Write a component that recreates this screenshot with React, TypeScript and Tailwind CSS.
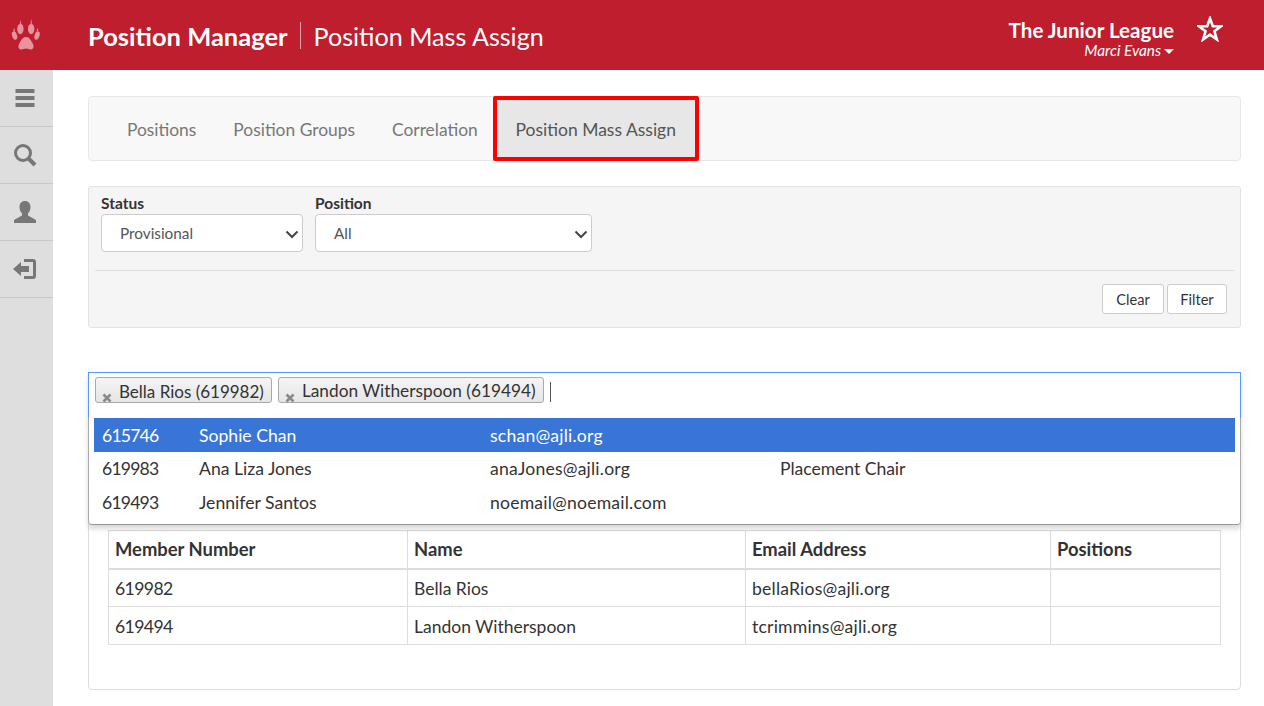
import React from "react";

const Chevron = () => (
  <svg width="14" height="14" viewBox="0 0 14 14" className="absolute right-[3px] top-[12px]">
    <path d="M1.500 4.500 L7 10 L12.500 4.500" fill="none" stroke="#444" strokeWidth="2" />
  </svg>
);

const Paw = () => (
  <svg width="30" height="36" viewBox="0 0 32 38" fill="#e8949f">
    <path d="M16 20c-3.600 0-5.400 3.800-7 6.800-1.300 2.400-1.800 5.200 .6 6.200 2.200 .9 4-.6 6.400-.6s4.200 1.500 6.400 .6c2.400-1 1.900-3.800 .6-6.200-1.600-3-3.400-6.800-7-6.800z" />
    <ellipse cx="10" cy="11.500" rx="3.400" ry="5.500" />
    <ellipse cx="21.500" cy="11.500" rx="3.400" ry="5.500" />
    <ellipse cx="3.800" cy="18.500" rx="2.600" ry="4.600" transform="rotate(-18 3.800 18.500)" />
    <ellipse cx="27.800" cy="18.500" rx="2.600" ry="4.600" transform="rotate(18 27.800 18.500)" />
    <path d="M10 2 L9.300 6 L11 6z M21.500 0.500 L20.700 6 L22.300 6z M3 10 L2.800 14 L4.400 13.500z M28.800 10 L27.300 13.500 L29 14z" />
  </svg>
);

const SideItem = ({ children }: { children: React.ReactNode }) => (
  <div className="flex h-[57px] items-center justify-center border-b border-[#c9c9c9] pr-[3px]">{children}</div>
);

const Token = ({ label, wide }: { label: string; wide?: boolean }) => (
  <div className={`relative flex h-[26px] items-center rounded-[3px] border border-[#aaaaaa] bg-gradient-to-b from-[#f4f4f4] to-[#e6e6e6] pl-[23px] pr-[7px] pt-[2px] leading-none text-[#333] ${wide ? "text-[17.3px]" : "text-[17px]"}`}>
    <svg width="10" height="10" viewBox="0 0 10 10" className="absolute bottom-[-1px] left-[6px]">
      <path d="M1.500 1.500 L8.500 8.500 M8.500 1.500 L1.500 8.500" stroke="#8a8a8a" strokeWidth="2.600" />
    </svg>
    {label}
  </div>
);

const Option = ({ cells, active }: { cells: string[]; active?: boolean }) => (
  <div className={`flex h-[34px] items-center px-[8px] text-[17.6px] ${active ? "bg-[#3875d7] pt-[2px] text-white" : "pt-[1px] text-[#333]"}`}>
    <div className="w-[97px] tracking-[-0.8px]">{cells[0]}</div>
    <div className="w-[291px]">{cells[1]}</div>
    <div className="w-[290px] tracking-[0.2px]">{cells[2]}</div>
    <div className="tracking-[-0.05px]">{cells[3]}</div>
  </div>
);

const thClass = "border border-b-2 border-[#dddddd] px-[6px] pt-[1px] text-left align-middle text-[18.4px] font-bold text-[#333]";
const tdClass = "border border-[#dddddd] px-[6px] pt-[3px] align-middle font-normal text-[#333]";

const Row = ({ c }: { c: string[] }) => (
  <tr className="h-[38px]">
    <td className={`${tdClass} text-[17.6px] tracking-[-0.6px]`}>{c[0]}</td>
    <td className={`${tdClass} text-[17.5px]`}>{c[1]}</td>
    <td className={`${tdClass} text-[17.6px] tracking-[0.2px]`}>{c[2]}</td>
    <td className={tdClass}>{c[3]}</td>
  </tr>
);

export default function App() {
  return (
    <div className="flex h-[706px] flex-col overflow-hidden bg-white font-['Lato',sans-serif] text-[#333]">
      <header className="relative flex h-[70px] shrink-0 items-center bg-[#be1e2d] text-white">
        <div className="flex w-[53px] shrink-0 justify-center pt-[1px] pr-[1px]"><Paw /></div>
        <div className="ml-[35px] mt-[4px] text-[25.5px] font-bold leading-none">Position Manager</div>
        <div className="ml-[12px] h-[27px] w-px bg-[#e8a0a8]" />
        <div className="ml-[13px] mt-[4px] text-[25.1px] leading-none">Position Mass Assign</div>
        <div className="ml-auto mr-[90px] mt-[6px] flex flex-col items-end">
          <div className="text-[20.6px] font-bold leading-[24px]">The Junior League</div>
          <div className="flex items-center text-[15.3px] italic leading-[16px]">
            Marci Evans
            <span className="ml-[3px] mt-[2px] h-0 w-0 border-x-[5px] border-t-[5px] border-x-transparent border-t-white" />
          </div>
        </div>
        <svg width="26" height="26" viewBox="0 0 28 28" className="absolute left-[1197px] top-[16px]">
          <path d="M14 2.500 L17 11 L26 11 L18.800 16.500 L21.400 25.200 L14 20 L6.600 25.200 L9.200 16.500 L2 11 L11 11 Z" fill="none" stroke="white" strokeWidth="2.800" />
        </svg>
      </header>

      <div className="flex min-h-0 flex-1">
        <aside className="w-[53px] shrink-0 bg-[#dedede]">
          <SideItem>
            <svg width="20" height="20" viewBox="0 0 20 20" fill="#777">
              <rect x="0.500" y="1" width="19" height="4" rx="0.500" />
              <rect x="0.500" y="8" width="19" height="4" rx="0.500" />
              <rect x="0.500" y="15" width="19" height="4" rx="0.500" />
            </svg>
          </SideItem>
          <SideItem>
            <svg width="24" height="24" viewBox="0 0 24 24" fill="none" stroke="#777">
              <circle cx="10" cy="10" r="7.500" strokeWidth="3" />
              <path d="M15.500 15.500 L22 22" strokeWidth="4" />
            </svg>
          </SideItem>
          <SideItem>
            <svg width="24" height="24" viewBox="0 0 24 24" fill="#777">
              <path d="M12 1c-3.600 0-5.500 2.600-5.500 6 0 2.600 1 5 2.500 6.300v2.200L1 20v3h22v-3l-8-4.500v-2.200c1.500-1.300 2.500-3.700 2.500-6.300 0-3.400-1.900-6-5.500-6z" />
            </svg>
          </SideItem>
          <SideItem>
            <svg width="24" height="22" viewBox="0 0 24 22" fill="#777">
              <path d="M0 11 L8 4 V8 H16 V14 H8 V18 Z" />
              <path d="M11 1 H20 Q23 1 23 4 V18 Q23 21 20 21 H11 V18 H20 V4 H11 Z" />
            </svg>
          </SideItem>
        </aside>

        <main className="flex min-w-0 flex-1 flex-col pl-[35px] pr-[23px] pt-[26px]">
          <nav className="flex h-[65px] shrink-0 items-center rounded-[4px] border border-[#e7e7e7] bg-[#f8f8f8] pl-[23px] text-[17.4px] text-[#777]">
            <div className="px-[15px] pt-[4px]">Positions</div>
            <div className="ml-[7px] px-[15px] pt-[4px]">Position Groups</div>
            <div className="ml-[7px] px-[15px] pt-[4px]">Correlation</div>
            <div className="flex h-[65px] w-[206px] items-center justify-center rounded-[2px] border-[4px] border-[#fd0000] bg-[#e7e7e7] pt-[4px] text-[17.5px] text-[#555]">
              Position Mass Assign
            </div>
          </nav>

          <section className="mt-[25px] h-[142px] shrink-0 rounded-[3px] border border-[#e3e3e3] bg-[#f5f5f5] px-[6px] pt-[7px]">
            <div className="flex gap-[12px] px-[6px]">
              <div>
                <div className="mb-[2px] text-[15.5px] font-bold leading-[18px] text-[#333]">Status</div>
                <div className="relative flex h-[38px] w-[202px] items-center rounded-[4px] border border-[#cccccc] bg-white pl-[18px] text-[15.3px] text-[#555]">
                  Provisional
                  <Chevron />
                </div>
              </div>
              <div>
                <div className="mb-[2px] text-[15.5px] font-bold leading-[18px] text-[#333]">Position</div>
                <div className="relative flex h-[38px] w-[277px] items-center rounded-[4px] border border-[#cccccc] bg-white pl-[18px] text-[15.3px] text-[#555]">
                  All
                  <Chevron />
                </div>
              </div>
            </div>
            <div className="mt-[18px] border-t border-[#dddddd]" />
            <div className="mt-[13px] flex justify-end gap-[3px] pr-[7px]">
              <div className="flex h-[30px] w-[62px] items-center justify-center rounded-[3px] border border-[#cccccc] bg-white pt-[2px] text-[14.6px] text-[#333]">Clear</div>
              <div className="flex h-[30px] w-[60px] items-center justify-center rounded-[3px] border border-[#cccccc] bg-white pt-[2px] text-[14.6px] text-[#333]">Filter</div>
            </div>
          </section>

          <section className="relative mt-[44px] h-[318px] shrink-0 rounded-[4px] border border-[#dddddd] bg-white px-[19px] pt-[157px]">
            <table className="w-[1113px] table-fixed border-collapse">
              <colgroup>
                <col className="w-[299px]" />
                <col className="w-[338px]" />
                <col className="w-[305px]" />
                <col className="w-[170px]" />
              </colgroup>
              <thead>
                <tr className="h-[38px]">
                  <th className={thClass}>Member Number</th>
                  <th className={thClass}>Name</th>
                  <th className={thClass}>Email Address</th>
                  <th className={thClass}>Positions</th>
                </tr>
              </thead>
              <tbody>
                <Row c={["619982", "Bella Rios", "bellaRios@ajli.org", ""]} />
                <Row c={["619494", "Landon Witherspoon", "tcrimmins@ajli.org", ""]} />
              </tbody>
            </table>

            <div className="absolute left-[-1px] right-[-1px] top-[-1px] h-[153px] rounded-b-[4px] bg-white shadow-[0_4px_5px_rgba(0,0,0,0.15)]">
              <div className="flex h-[46px] items-start gap-[6px] border border-b-0 border-[#5897fb] pl-[6px] pt-[4px]">
                <Token label="Bella Rios (619982)" />
                <Token wide label="Landon Witherspoon (619494)" />
                <div className="mt-[5px] h-[20px] w-px bg-[#555]" />
              </div>
              <div className="h-[107px] rounded-b-[4px] border border-t-0 border-x-[#aaaaaa] border-b-[#999999] px-[5px]">
                <Option active cells={["615746", "Sophie Chan", "schan@ajli.org", ""]} />
                <Option cells={["619983", "Ana Liza Jones", "anaJones@ajli.org", "Placement Chair"]} />
                <Option cells={["619493", "Jennifer Santos", "noemail@noemail.com", ""]} />
              </div>
            </div>
          </section>
        </main>
      </div>
    </div>
  );
}
